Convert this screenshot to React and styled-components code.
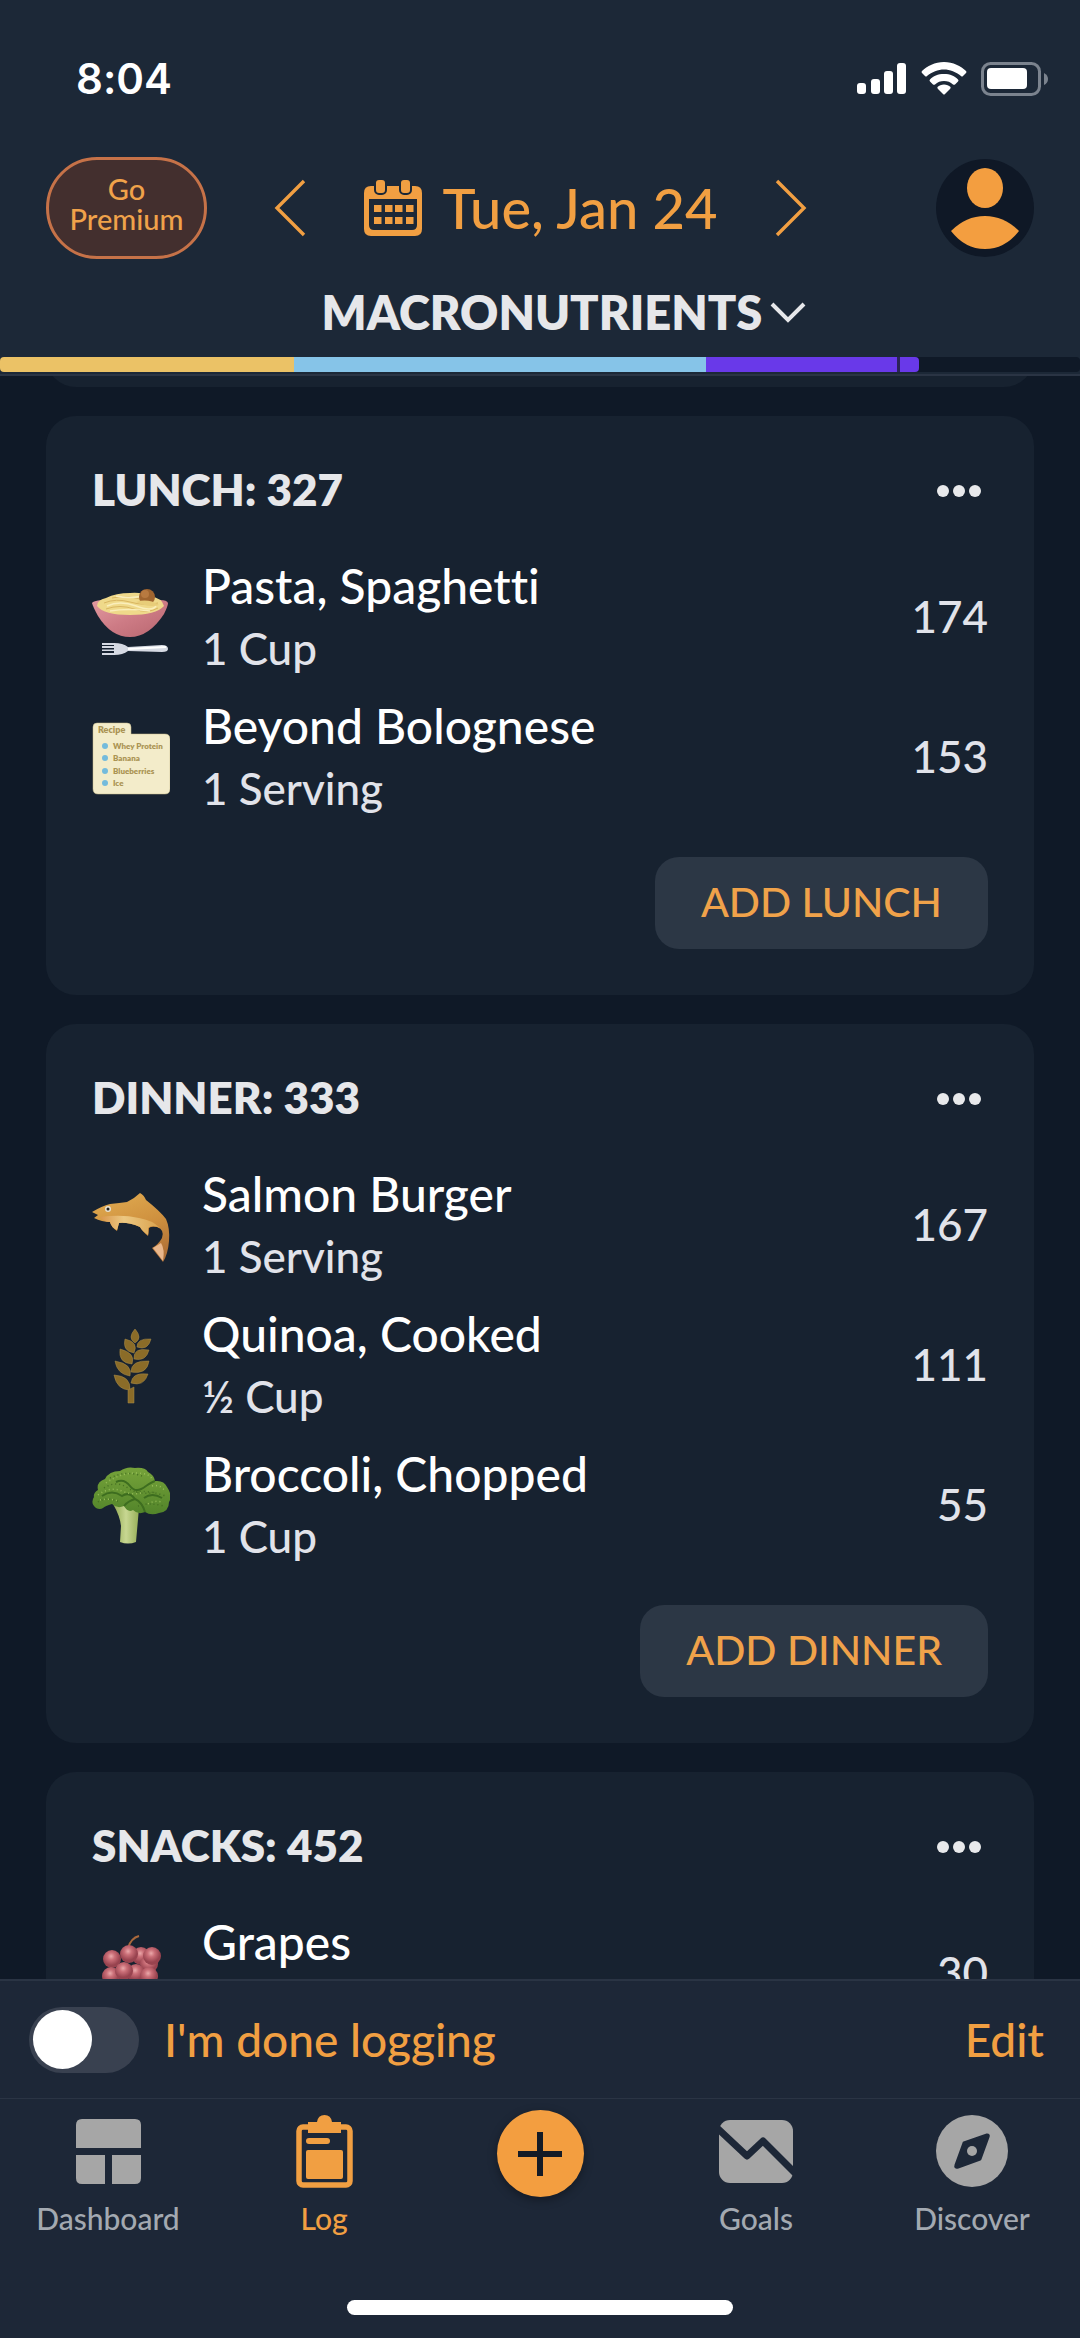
import React, { useState } from 'react'
import styled, { createGlobalStyle } from 'styled-components';

const macros = [
    { name: 'Fat', share: 27.2, color: '#ebc266' },
    { name: 'Carbs', share: 38.2, color: '#86c4e8' },
    { name: 'Protein', share: 17.7, color: '#6939e9' },
    { name: 'Protein over goal', share: 2, color: '#6939e9', split: true },
];

const meals = [
    {
        title: 'LUNCH', total: 327, add: 'ADD LUNCH',
        foods: [
            { name: 'Pasta, Spaghetti', amount: '1 Cup', calories: 174, Icon: PastaIcon },
            { name: 'Beyond Bolognese', amount: '1 Serving', calories: 153, Icon: RecipeIcon },
        ],
    },
    {
        title: 'DINNER', total: 333, add: 'ADD DINNER',
        foods: [
            { name: 'Salmon Burger', amount: '1 Serving', calories: 167, Icon: FishIcon },
            { name: 'Quinoa, Cooked', amount: '½ Cup', calories: 111, Icon: GrainIcon },
            { name: 'Broccoli, Chopped', amount: '1 Cup', calories: 55, Icon: BroccoliIcon },
        ],
    },
    {
        title: 'SNACKS', total: 452, add: 'ADD SNACKS',
        foods: [
            { name: 'Grapes', amount: '1 Cup', calories: 30, Icon: GrapesIcon },
        ],
    },
];

export default function App() {
    const [done, setDone] = useState(false);
    return (
        <>
            <GlobalStyle />
            <Screen>
                <Header>
                    <StatusBar>
                        <Clock>8:04</Clock>
                        <StatusIcons />
                    </StatusBar>
                    <Toolbar>
                        <PremiumButton>Go<br />Premium</PremiumButton>
                        <DatePicker>
                            <IconButton aria-label="Previous day">
                                <svg width="32" height="58" viewBox="0 0 32 58"><path d="M30 2 L3 29 L30 56" fill="none" stroke="#f19f42" strokeWidth="3.4" /></svg>
                            </IconButton>
                            <DateButton>
                                <CalendarIcon />
                                Tue, Jan 24
                            </DateButton>
                            <IconButton aria-label="Next day">
                                <svg width="32" height="58" viewBox="0 0 32 58"><path d="M2 2 L29 29 L2 56" fill="none" stroke="#f19f42" strokeWidth="3.4" /></svg>
                            </IconButton>
                        </DatePicker>
                        <IconButton aria-label="Profile">
                            <ProfileIcon />
                        </IconButton>
                    </Toolbar>
                    <MacroButton>
                        MACRONUTRIENTS
                        <svg width="36" height="22" viewBox="0 0 36 22"><path d="M2 3 L18 19 L34 3" fill="none" stroke="#e6e7ea" strokeWidth="4" /></svg>
                    </MacroButton>
                    <MacroBar>
                        {macros.map(({ name, share, color, split }) => (
                            <Segment key={name} title={name} $color={color} $split={split} style={{ width: `${share}%` }} />
                        ))}
                    </MacroBar>
                </Header>

                <Feed>
                    <PreviousCard />
                    {meals.map(meal => <Meal key={meal.title} {...meal} />)}
                </Feed>

                <Footer>
                    <DoneBar>
                        <DoneLabel>
                            <Switch type="checkbox" role="switch" checked={done} onChange={() => setDone(!done)} />
                            I'm done logging
                        </DoneLabel>
                        <EditButton>Edit</EditButton>
                    </DoneBar>
                    <Tabs>
                        <Tab href="#dashboard"><TabIcon><DashboardIcon /></TabIcon>Dashboard</Tab>
                        <Tab href="#log" $active><TabIcon><LogIcon /></TabIcon>Log</Tab>
                        <AddCell>
                            <AddButton aria-label="Add food">
                                <svg width="44" height="44" viewBox="0 0 44 44"><path d="M22 0 V44 M0 22 H44" stroke="#141b26" strokeWidth="6" /></svg>
                            </AddButton>
                        </AddCell>
                        <Tab href="#goals"><TabIcon><GoalsIcon /></TabIcon>Goals</Tab>
                        <Tab href="#discover"><TabIcon><DiscoverIcon /></TabIcon>Discover</Tab>
                    </Tabs>
                    <HomeIndicator />
                </Footer>
            </Screen>
        </>
    )
}

function Meal({ title, total, add, foods }) {
    return (
        <Card>
            <CardHeader>
                <CardTitle>{title}: {total}</CardTitle>
                <IconButton aria-label={`${title} options`}>
                    <svg width="52" height="16" viewBox="0 0 52 16" fill="#e8e9eb">
                        <circle cx="7" cy="10" r="6" />
                        <circle cx="23" cy="10" r="6" />
                        <circle cx="39" cy="10" r="6" />
                    </svg>
                </IconButton>
            </CardHeader>
            {foods.map(({ name, amount, calories, Icon }) => (
                <FoodRow key={name}>
                    <Icon />
                    <FoodText>
                        <FoodName>{name}</FoodName>
                        <FoodAmount>{amount}</FoodAmount>
                    </FoodText>
                    <Calories>{calories}</Calories>
                </FoodRow>
            ))}
            <AddMealButton>{add}</AddMealButton>
        </Card>
    )
}

function StatusIcons() {
    return (
        <svg width="191" height="34" viewBox="0 0 191 34">
            <g fill="#fff">
                <rect x="0" y="21" width="9" height="11" rx="3" />
                <rect x="14" y="17" width="9" height="15" rx="3" />
                <rect x="27" y="9" width="9" height="23" rx="3" />
                <rect x="40" y="1" width="9" height="31" rx="3" />
                <path d="M87 0 C78 0 70 4 65 9 Q64 10 65 11 L68 14 Q69 15 70 14 C75 10 81 7.500 87 7.500 S99 10 104 14 Q105 15 106 14 L109 11 Q110 10 109 9 C104 4 96 0 87 0 Z" />
                <path d="M87 12 C81 12 76 14 73 17.500 Q72 18.500 73 19.500 L76 22.500 Q77 23 78 22.500 C80.500 20 83.500 19 87 19 S93.500 20 96 22.500 Q97 23 98 22.500 L101 19.500 Q102 18.500 101 17.500 C98 14 93 12 87 12 Z" />
                <path d="M87 22.500 C84.500 22.500 82 23.500 80.500 25 Q80 26 81 27 L86 32 Q87 33 88 32 L93 27 Q94 26 93.500 25 C92 23.500 89.500 22.500 87 22.500 Z" />
                <rect x="130" y="6" width="40" height="21" rx="4" />
            </g>
            <rect x="125.500" y="1.500" width="57" height="31" rx="8" fill="none" stroke="#7b838e" strokeWidth="3" />
            <path d="M187 11 Q191 13 191 17 T187 23 Z" fill="#7b838e" />
        </svg>
    )
}

function CalendarIcon() {
    const columns = [10, 21, 31, 42];
    return (
        <svg width="59" height="56" viewBox="0 0 59 56">
            <path fill="#f19f42" fillRule="evenodd" d="M7 6 H51 Q58 6 58 13 V49 Q58 56 51 56 H7 Q0 56 0 49 V13 Q0 6 7 6 Z M5 19 V45 Q5 50 10 50 H48 Q53 50 53 45 V19 Z" />
            <g fill="#f19f42" stroke="#1c2836" strokeWidth="2">
                <rect x="11" y="-1" width="11" height="15" rx="4" />
                <rect x="36" y="-1" width="11" height="15" rx="4" />
            </g>
            <g fill="#f19f42">
                {columns.map(x => <rect key={x} x={x} y="25" width="7.500" height="7" />)}
                {columns.map(x => <rect key={x} x={x} y="37" width="7.500" height="7" />)}
            </g>
        </svg>
    )
}

function ProfileIcon() {
    return (
        <svg width="98" height="98" viewBox="0 0 98 98">
            <circle cx="49" cy="49" r="49" fill="#0f1826" />
            <g fill="#f39e40">
                <ellipse cx="49" cy="29" rx="18" ry="20" />
                <path d="M15 72 Q30 57 49 57 T83 72 Q69 90 49 90 T15 72 Z" />
            </g>
        </svg>
    )
}

function PastaIcon() {
    return (
        <svg width="78" height="78" viewBox="0 0 78 78">
            <defs>
                <linearGradient id="bowl" x1="0" x2="1" y2="1">
                    <stop offset="0" stopColor="#e29aa0" />
                    <stop offset="0.500" stopColor="#cd7b85" />
                    <stop offset="1" stopColor="#b8666f" />
                </linearGradient>
            </defs>
            <path d="M0 25 Q1 23 10 22 L68 22 Q75 22 76 25 Q76 28 72 36 Q57 59 38 59 T6 38 Q1 29 0 25 Z" fill="url(#bowl)" />
            <path d="M5 28 Q5 22 14 20 Q24 15 38 15 Q50 14 58 18 Q70 20 72 28 Q64 37 38 37 T5 28 Z" fill="#efd98a" />
            <path d="M12 25 Q24 20 38 24 T66 25 M14 31 Q28 26 42 31 T66 30 M20 20 Q34 17 48 21" fill="none" stroke="#d9b661" strokeWidth="1" />
            <path d="M15 28 Q28 22 44 28 T64 28 M24 18 Q37 21 51 18 M18 33 Q36 30 58 33" fill="none" stroke="#faeebb" strokeWidth="1.500" />
            <circle cx="55" cy="19" r="8" fill="#a0652f" />
            <circle cx="53" cy="16" r="4" fill="#b87a40" />
            <path d="M44 24 Q56 20 67 27 Q56 30 44 24 Z" fill="#e8cd79" />
            <path d="M10 65 H22 Q31 65 36 69 L70 67 Q76 67 76 71 Q76 74 70 74 L36 73 Q31 77 22 77 H10 V75 H22 V73 H10 V71.500 H22 V70 H10 V68 H22 V67 H10 Z" fill="#d6dae3" />
            <path d="M36 71 L74 69" stroke="#fff" strokeWidth="2" />
        </svg>
    )
}

function RecipeIcon() {
    const lines = [['Whey Protein', 28], ['Banana', 40], ['Blueberries', 53], ['Ice', 65]];
    return (
        <svg width="78" height="78" viewBox="0 0 78 78">
            <path d="M5 5 H35 Q39 5 39 9 V16 H73 Q78 16 78 21 V71 Q78 76 73 76 H6 Q1 76 1 71 V9 Q1 5 5 5 Z" fill="#f3ecca" stroke="#c9bd8a" strokeWidth="0.500" />
            <g fill="#ab9454" fontFamily="Lato, sans-serif" fontWeight="800">
                <text x="6" y="15" fontSize="9">Recipe</text>
                {lines.map(([text, y]) => <text key={text} x="21" y={y + 3} fontSize="8">{text}</text>)}
            </g>
            {lines.map(([text, y]) => <circle key={text} cx="13" cy={y} r="3" fill="#74bbdc" />)}
        </svg>
    )
}

function FishIcon() {
    return (
        <svg width="78" height="78" viewBox="0 0 78 78">
            <defs>
                <linearGradient id="fish" x1="0.300" x2="0.700" y2="1">
                    <stop offset="0" stopColor="#dfa94f" />
                    <stop offset="0.500" stopColor="#cf913f" />
                    <stop offset="1" stopColor="#ad6e36" />
                </linearGradient>
                <linearGradient id="belly" x2="1">
                    <stop offset="0" stopColor="#d9964c" />
                    <stop offset="0.400" stopColor="#ecc882" />
                    <stop offset="1" stopColor="#d9a24d" />
                </linearGradient>
            </defs>
            <path d="M0 26 Q10 20 18 18 Q28 17 35 16 Q43 12 48 7 Q52 9 54 14 Q68 25 74 33 Q78 42 77 55 Q76 68 71 76 L60 62 Q66 59 70 52 Q73 44 65 41 Q59 40 57 42 Q57 47 56 50 Q50 45 48 41 Q36 36 27 37 L25 45 Q19 41 18 36 Q10 36 2 32 L6 29 Z" fill="url(#fish)" />
            <path d="M8 31 Q30 28 47 32 Q60 34 68 42 Q60 38 56 42 L56 49 Q50 45 48 41 Q36 36 27 37 L25 44 Q19 41 18 36 Q12 36 8 31 Z" fill="url(#belly)" />
            <path d="M61 62 L69 57 Q73 63 71 75 Z" fill="#e9b78c" />
            <circle cx="16" cy="23" r="3" fill="#e8e2d4" />
            <circle cx="16" cy="23" r="1.500" fill="#20201f" />
        </svg>
    )
}

function GrainIcon() {
    return (
        <svg width="78" height="78" viewBox="0 0 78 78">
            <g fill="#8b6c28" stroke="#a98c4a" strokeWidth="0.500">
                <path d="M43 3 Q51 12 43 17 Q35 12 43 3 Z" />
                <path d="M33 13 Q47 16 42 27 Q30 25 33 13 Z" />
                <path d="M59 13 Q56 25 45 21 Q45 12 59 13 Z" />
                <path d="M28 23 Q44 27 40 38 Q26 37 28 23 Z" />
                <path d="M57 24 Q54 36 42 33 Q41 21 57 24 Z" />
                <path d="M23 35 Q41 38 38 50 Q25 48 23 35 Z" />
                <path d="M57 35 Q55 49 39 46 Q39 34 57 35 Z" />
                <path d="M22 49 Q39 50 38 64 Q25 64 22 49 Z" />
                <path d="M56 48 Q52 61 39 57 Q40 46 56 48 Z" />
                <path d="M36 64 L42 61 V77 H36 Z" />
            </g>
        </svg>
    )
}

function BroccoliIcon() {
    return (
        <svg width="78" height="78" viewBox="0 0 78 78">
            <defs>
                <linearGradient id="stalk">
                    <stop offset="0" stopColor="#8fa84f" />
                    <stop offset="0.500" stopColor="#c8d792" />
                    <stop offset="1" stopColor="#96ae58" />
                </linearGradient>
                <linearGradient id="crown" x2="0" y2="1">
                    <stop offset="0" stopColor="#76a33a" />
                    <stop offset="1" stopColor="#52842a" />
                </linearGradient>
            </defs>
            <path d="M21 38 Q28 50 29 60 L28 76 Q36 79 44 76 L47 42 Z" fill="url(#stalk)" />
            <path d="M4 42 Q-2 37 2 31 Q1 27 6 24 Q4 16 13 13 Q17 5 28 5 Q35 0 43 2 Q53 1 56 6 Q62 9 63 15 Q72 14 75 21 Q81 30 77 36 Q77 46 67 47 Q59 50 53 46 Q46 49 41 44 Q36 47 32 40 Q25 43 20 38 Q13 40 11 42 Q8 44 4 42 Z" fill="url(#crown)" />
            <path d="M10 30 Q20 23 30 30 Q37 25 43 33 M32 40 Q36 35 43 33 Q50 36 53 46 M24 16 Q32 12 38 20 T54 20 M54 20 Q60 16 63 15 M52 32 Q60 26 70 32" fill="none" stroke="#3d6d1f" strokeWidth="2" />
            <g fill="none" stroke="#446f22" strokeWidth="1.500" strokeDasharray="1 3">
                <path d="M6 36 Q14 30 28 36 M12 22 Q24 14 36 22 T64 26 M18 12 Q34 4 50 10 M46 40 Q56 36 72 40 M44 26 Q56 24 74 30" />
            </g>
            <g fill="none" stroke="#96bd58" strokeWidth="1.500" strokeDasharray="1 3">
                <path d="M14 17 Q28 7 44 7 T60 15 M6 29 Q18 20 30 25 T52 26 M60 20 Q68 18 73 25 M8 34 Q18 32 26 35 M56 38 Q62 34 70 36" />
            </g>
        </svg>
    )
}

function GrapesIcon() {
    const grapes = [[49, 22], [57, 30], [44, 39], [20, 25], [60, 22], [37, 20], [19, 42], [57, 42], [32, 37], [26, 54], [40, 55], [52, 55], [36, 68]];
    return (
        <svg width="78" height="78" viewBox="0 0 78 78">
            <defs>
                <radialGradient id="grape" cx="0.450" cy="0.350">
                    <stop offset="0" stopColor="#eaa9aa" />
                    <stop offset="0.400" stopColor="#cb6f78" />
                    <stop offset="1" stopColor="#98434f" />
                </radialGradient>
            </defs>
            <path d="M36 14 Q39 4 47 2" fill="none" stroke="#a8683c" strokeWidth="2" />
            {grapes.map(([x, y]) => <circle key={`${x}-${y}`} cx={x} cy={y} r="9" fill="url(#grape)" />)}
        </svg>
    )
}

function DashboardIcon() {
    return (
        <svg width="65" height="65" viewBox="0 0 65 65" fill="#a6a6a6">
            <path d="M6 0 H59 Q65 0 65 6 V29 H0 V6 Q0 0 6 0 Z" />
            <path d="M0 36 H29 V65 H6 Q0 65 0 59 Z" />
            <path d="M36 36 H65 V59 Q65 65 59 65 H36 Z" />
        </svg>
    )
}

function LogIcon() {
    return (
        <svg width="57" height="74" viewBox="0 0 57 74" fill="#f19f42">
            <rect x="3" y="13" width="51" height="58" rx="4" fill="none" stroke="#f19f42" strokeWidth="5.500" />
            <path d="M12 8 H21 Q22 1 28.500 1 T36 8 H45 V19 H12 Z" />
            <rect x="10" y="24" width="24" height="6" rx="3" />
            <rect x="10" y="36" width="37" height="29" rx="2" />
        </svg>
    )
}

function GoalsIcon() {
    return (
        <svg width="74" height="63" viewBox="0 0 74 63">
            <rect width="74" height="63" rx="11" fill="#a6a6a6" />
            <path d="M-3 7 L28 36 L44 21 L77 54" fill="none" stroke="#1d2737" strokeWidth="7" strokeLinejoin="round" />
        </svg>
    )
}

function DiscoverIcon() {
    return (
        <svg width="72" height="72" viewBox="0 0 72 72">
            <circle cx="36" cy="36" r="36" fill="#a6a6a6" />
            <path d="M28 28 L51 20 Q53 20 52 22 L44 44 L22 52 Q19 53 20 50 Z" fill="#1d2737" stroke="#1d2737" strokeWidth="3" strokeLinejoin="round" />
            <circle cx="36" cy="36" r="5" fill="#a6a6a6" />
        </svg>
    )
}

const GlobalStyle = createGlobalStyle`
    * {
        box-sizing: border-box;
    }
    body {
        margin: 0;
        background-color: #0f1927;
        font-family: Lato, sans-serif;
        font-weight: 500;
        font-variant-ligatures: none;
    }
    button {
        font-family: inherit;
        font-weight: inherit;
        border: none;
        padding: 0;
        background: none;
        cursor: pointer;
    }
    svg {
        display: block;
        flex-shrink: 0;
    }
`

const Screen = styled.div`
    display: flex;
    flex-direction: column;
    height: 100vh;
`

const Header = styled.header`
    background-color: #1c2837;
    border-bottom: 2px solid #2a3444;
    flex-shrink: 0;
`

const StatusBar = styled.div`
    display: flex;
    justify-content: space-between;
    align-items: center;
    padding: 53px 32px 0 76px;
    height: 104px;
`

const Clock = styled.time`
    font-family: Inter, sans-serif;
    font-size: 42px;
    font-weight: 600;
    color: #fff;
`

const Toolbar = styled.div`
    display: flex;
    justify-content: space-between;
    align-items: center;
    padding: 53px 46px 0;
`

const PremiumButton = styled.button`
    width: 161px;
    height: 102px;
    padding-bottom: 8px;
    border: 3px solid #c67248;
    border-radius: 51px;
    background-color: #432f2e;
    color: #f0a24a;
    font-size: 29px;
    line-height: 30px;
`

const DatePicker = styled.div`
    display: flex;
    align-items: center;
    gap: 58px;
    margin-right: 62px;
`

const IconButton = styled.button`
    display: flex;
`

const DateButton = styled.button`
    display: flex;
    align-items: center;
    gap: 20px;
    color: #f19f42;
    font-size: 56px;
    line-height: 64px;
`

const MacroButton = styled.button`
    display: flex;
    align-items: center;
    gap: 8px;
    margin: 26px auto 18px;
    padding-left: 48px;
    color: #e6e7ea;
    font-size: 47px;
    font-weight: 800;
    line-height: 54px;
`

const MacroBar = styled.div`
    display: flex;
    height: 15px;
    margin-bottom: 2px;
    border-radius: 4px;
    background-color: #0f1927;
    overflow: hidden;
`

const Segment = styled.div`
    background-color: ${({ $color }) => $color};
    border-left: ${({ $split }) => $split ? '3px solid #2b2358' : 'none'};
    border-radius: ${({ $split }) => $split ? '0 4px 4px 0' : '0'};
`

const Feed = styled.main`
    flex: 1;
    min-height: 0;
    display: flex;
    flex-direction: column;
    gap: 29px;
    padding: 0 46px;
    overflow-y: auto;
    scrollbar-width: none;
`

const PreviousCard = styled.div`
    flex-shrink: 0;
    height: 60px;
    margin-top: -49px;
    border-radius: 30px;
    background-color: #172230;
`

const Card = styled.section`
    flex-shrink: 0;
    display: flex;
    flex-direction: column;
    padding: 46px;
    border-radius: 30px;
    background-color: #172230;
`

const CardHeader = styled.div`
    display: flex;
    justify-content: space-between;
    align-items: center;
    margin-bottom: 31px;
`

const CardTitle = styled.h2`
    margin: 0;
    color: #e6e7ea;
    font-size: 44px;
    font-weight: 800;
    line-height: 54px;
`

const FoodRow = styled.div`
    display: flex;
    align-items: center;
    gap: 32px;
    height: 140px;
`

const FoodText = styled.div`
    flex: 1;
    padding-bottom: 2px;
`

const FoodName = styled.div`
    color: #fff;
    font-size: 48px;
    line-height: 64px;
`

const FoodAmount = styled.div`
    color: #e1e3ea;
    font-size: 44px;
    line-height: 60px;
`

const Calories = styled.div`
    color: #e1e3ea;
    font-size: 44px;
    line-height: 60px;
    padding-bottom: 2px;
`

const AddMealButton = styled.button`
    align-self: flex-end;
    height: 92px;
    margin-top: 30px;
    padding: 0 46px 4px;
    border-radius: 24px;
    background-color: #2c3745;
    color: #f0a24a;
    font-size: 41px;
`

const Footer = styled.footer`
    flex-shrink: 0;
    background-color: #1d2737;
    border-top: 2px solid #2a3444;
`

const DoneBar = styled.div`
    display: flex;
    justify-content: space-between;
    align-items: center;
    height: 118px;
    padding: 0 36px 0 29px;
    border-bottom: 1px solid #2a3444;
    color: #f19f42;
    font-size: 46px;
    line-height: 54px;
`

const DoneLabel = styled.label`
    display: flex;
    align-items: center;
    gap: 25px;
    cursor: pointer;
`

const Switch = styled.input`
    appearance: none;
    display: flex;
    align-items: center;
    width: 110px;
    height: 66px;
    margin: 0;
    padding: 0 4px;
    border-radius: 33px;
    background-color: #394150;
    cursor: pointer;

    &::before {
        content: '';
        width: 59px;
        height: 59px;
        border-radius: 50%;
        background-color: #fff;
    }

    &:checked {
        justify-content: flex-end;
        background-color: #f19f42;
    }
`

const EditButton = styled.button`
    color: inherit;
    font-size: 46px;
`

const Tabs = styled.nav`
    display: grid;
    grid-template-columns: repeat(5, 1fr);
    padding-top: 11px;
`

const Tab = styled.a`
    display: flex;
    flex-direction: column;
    align-items: center;
    color: ${({ $active }) => $active ? '#f19f42' : '#a3a9b1'};
    font-size: 30px;
    line-height: 36px;
    text-decoration: none;
`

const TabIcon = styled.span`
    display: flex;
    align-items: center;
    height: 82px;
    margin-bottom: 8px;
`

const AddCell = styled.div`
    display: flex;
    justify-content: center;
`

const AddButton = styled.button`
    display: flex;
    align-items: center;
    justify-content: center;
    width: 87px;
    height: 87px;
    border-radius: 50%;
    background-color: #f39e40;
    box-shadow: 0 3px 10px rgba(0, 0, 0, .35);
`

const HomeIndicator = styled.div`
    width: 386px;
    height: 15px;
    margin: 64px auto 23px;
    border-radius: 8px;
    background-color: #fff;
`
